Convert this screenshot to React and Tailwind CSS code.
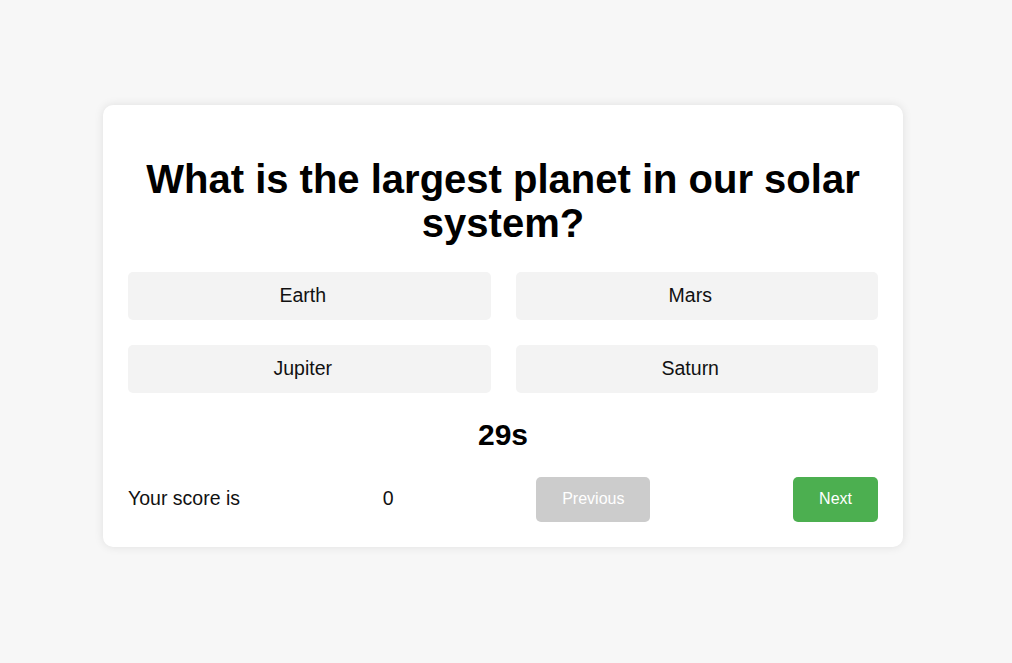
const options = ['Earth', 'Mars', 'Jupiter', 'Saturn'];

export default function App() {
  return (
    <div className="min-h-screen bg-[#f7f7f7] flex items-center justify-center pr-[6px] pb-[12px] font-['Liberation_Sans',Arial,sans-serif]">
      <div className="w-[800px] bg-white rounded-[10px] p-[25px] shadow-[0_0_10px_rgba(0,0,0,0.1)]">
        <h1 className="text-[40px] leading-[44px] font-bold text-black text-center my-[27px]">
          What is the largest planet in our solar system?
        </h1>
        <div className="grid grid-cols-2 gap-[25px]">
          {options.map(o => (
            <button key={o} className="h-[48px] pr-[13px] pt-[1px] bg-[#f3f3f3] rounded-[5px] text-[19.5px] text-[#111]">{o}</button>
          ))}
        </div>
        <div className="text-center text-[30px] leading-[34px] font-bold text-black my-[25px]">29s</div>
        <div className="flex items-center justify-between text-[19.5px] text-[#111]">
          <span>Your score is</span>
          <span>0</span>
          <button className="h-[45px] px-[26px] rounded-[5px] bg-[#cccccc] text-white text-[16px]">Previous</button>
          <button className="h-[45px] px-[26px] rounded-[5px] bg-[#4caf50] text-white text-[16px]">Next</button>
        </div>
      </div>
    </div>
  );
}
